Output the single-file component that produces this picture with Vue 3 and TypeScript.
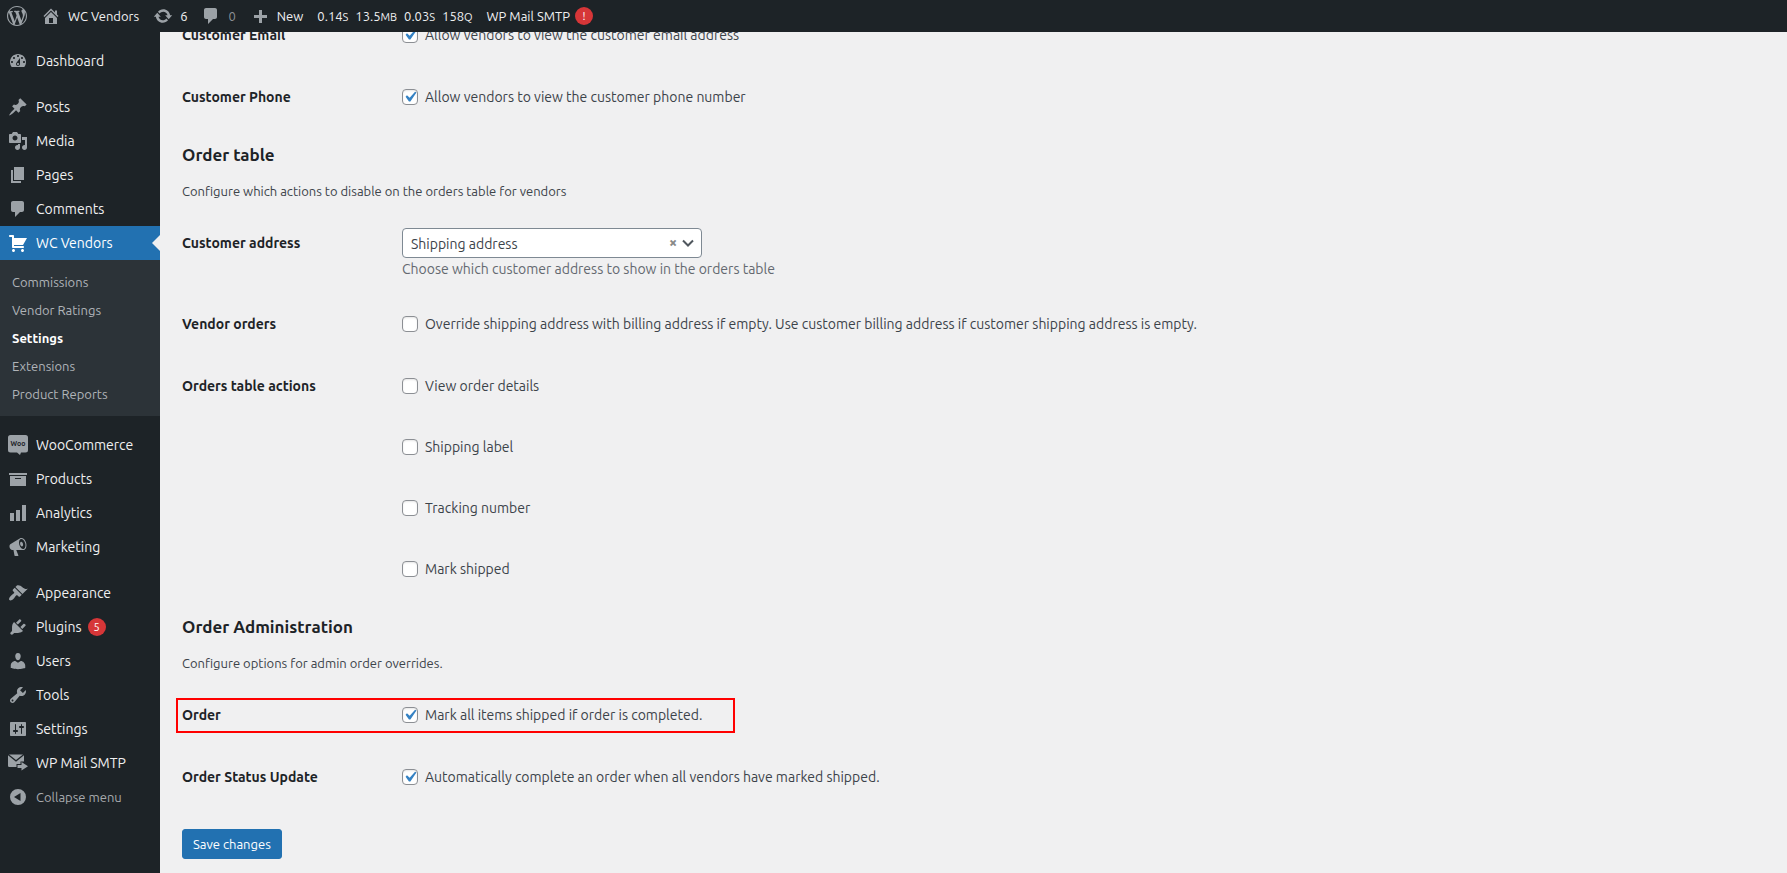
<script setup lang="ts">
import { reactive, ref } from 'vue'

interface MenuItem {
  label: string
  icon: string
  badge?: number
}

const icons: Record<string, string> = {
  wordpress:
    'M20 10c0-5.51-4.49-10-10-10C4.48 0 0 4.49 0 10c0 5.52 4.48 10 10 10 5.51 0 10-4.48 10-10zM7.78 15.37L4.37 6.22c.55-.02 1.17-.08 1.17-.08.5-.06.44-1.13-.06-1.11 0 0-1.45.11-2.37.11-.18 0-.37 0-.58-.01C4.12 2.69 6.87 1.11 10 1.11c2.33 0 4.45.87 6.05 2.34-.68-.11-1.65.39-1.65 1.58 0 .74.45 1.36.9 2.1.35.61.55 1.36.55 2.46 0 1.49-1.4 5-1.4 5l-3.03-8.37c.54-.02.82-.17.82-.17.5-.05.44-1.25-.06-1.22 0 0-1.44.12-2.38.12-.87 0-2.33-.12-2.33-.12-.5-.03-.56 1.2-.06 1.22l.92.08 1.26 3.41zM17.41 10c.24-.64.74-1.87.43-4.25.7 1.29 1.05 2.71 1.05 4.25 0 3.29-1.73 6.24-4.4 7.78.97-2.59 1.94-5.2 2.92-7.78zM6.1 18.09C3.12 16.65 1.11 13.53 1.11 10c0-1.3.23-2.48.72-3.59C3.25 10.3 4.67 14.2 6.1 18.09zm4.03-6.63l2.58 6.98c-.86.29-1.76.45-2.71.45-.79 0-1.57-.11-2.29-.33.81-2.38 1.62-4.74 2.42-7.1z',
  home: 'M16 8.5l1.53 1.53-1.06 1.06L10 4.6l-6.47 6.49-1.06-1.06L10 2.5l4 4v-2h2v4zm-6-2.46l6 5.99V18H4v-5.97zM12 17v-5H8v5h4z',
  update:
    'M10.2 3.28c3.53 0 6.43 2.61 6.92 6h2.08l-3.5 4-3.5-4h2.32c-.45-1.97-2.21-3.45-4.32-3.45-1.45 0-2.73.71-3.54 1.78L4.95 5.66C6.23 4.2 8.11 3.28 10.2 3.28zm-.4 13.44c-3.52 0-6.43-2.61-6.92-6H.8l3.5-4c1.17 1.33 2.33 2.67 3.5 4H5.48c.45 1.97 2.21 3.45 4.32 3.45 1.45 0 2.73-.71 3.54-1.78l1.71 1.95c-1.28 1.46-3.15 2.38-5.25 2.38z',
  plus: 'M17 9v3h-5v5H9v-5H4V9h5V4h3v5h5z',
  dashboard:
    'M3.76 16h12.48c1.1-1.37 1.76-3.11 1.76-5 0-4.42-3.58-8-8-8s-8 3.58-8 8c0 1.89.66 3.63 1.76 5zM10 4c.55 0 1 .45 1 1s-.45 1-1 1-1-.45-1-1 .45-1 1-1zM6 6c.55 0 1 .45 1 1s-.45 1-1 1-1-.45-1-1 .45-1 1-1zm8 0c.55 0 1 .45 1 1s-.45 1-1 1-1-.45-1-1 .45-1 1-1zm-5.37 5.55L12 7v6c0 1.1-.9 2-2 2s-2-.9-2-2c0-.57.24-1.08.63-1.45zM4 10c.55 0 1 .45 1 1s-.45 1-1 1-1-.45-1-1 .45-1 1-1zm12 0c.55 0 1 .45 1 1s-.45 1-1 1-1-.45-1-1 .45-1 1-1zm-5 3c0-.55-.45-1-1-1s-1 .45-1 1 .45 1 1 1 1-.45 1-1z',
  post: 'M10.44 3.02l1.82-1.82 6.36 6.35-1.83 1.82c-1.05-.68-2.48-.57-3.41.36l-.75.75c-.92.93-1.04 2.35-.35 3.41l-1.83 1.82-2.41-2.41-2.8 2.79c-.42.42-3.38 2.71-3.8 2.29s1.86-3.39 2.28-3.81l2.79-2.79L4.1 9.36l1.83-1.82c1.05.69 2.48.57 3.4-.36l.75-.75c.93-.92 1.05-2.35.36-3.41z',
  media:
    'M13 11V4c0-.55-.45-1-1-1h-1.67L9 1H5L3.67 3H2c-.55 0-1 .45-1 1v7c0 .55.45 1 1 1h10c.55 0 1-.45 1-1zM7 4.5c1.38 0 2.5 1.12 2.5 2.5S8.38 9.5 7 9.5 4.5 8.38 4.5 7 5.62 4.5 7 4.5zM14 6h5v10.5c0 1.38-1.12 2.5-2.5 2.5S14 17.88 14 16.5s1.12-2.5 2.5-2.5c.17 0 .34.02.5.05V9h-3V6zm-4 8.05V13h2v3.5c0 1.38-1.12 2.5-2.5 2.5S7 17.88 7 16.5 8.12 14 9.5 14c.17 0 .34.02.5.05z',
  page: 'M6 15V2h10v13H6zm-1 1h8v2H3V5h2v11z',
  comment:
    'M5 2h9c1.1 0 2 .9 2 2v7c0 1.1-.9 2-2 2h-2l-5 5v-5H5c-1.1 0-2-.9-2-2V4c0-1.1.9-2 2-2z',
  cart: 'M6 13h9c.55 0 1 .45 1 1s-.45 1-1 1H5c-.55 0-1-.45-1-1V4H2c-.55 0-1-.45-1-1s.45-1 1-1h3c.55 0 1 .45 1 1v2h13l-4 7H6v1zm-.5 3c.83 0 1.5.67 1.5 1.5S6.33 19 5.5 19 4 18.33 4 17.5 4.67 16 5.5 16zm9 0c.83 0 1.5.67 1.5 1.5s-.67 1.5-1.5 1.5-1.5-.67-1.5-1.5.67-1.5 1.5-1.5z',
  archive: 'M19 4v2H1V4h18zM2 7h16v10H2V7zm11 3V9H7v1h6z',
  chart: 'M18 18V2h-4v16h4zm-6 0V7H8v11h4zm-6 0v-8H2v8h4z',
  megaphone:
    'M18.15 5.94c.46 1.62.38 3.22-.02 4.48-.42 1.28-1.26 2.18-2.3 2.48-.16.06-.26.06-.4.06-.06.02-.12.02-.18.02-.06.02-.14.02-.22.02h-6.8l2.22 5.5c.02.14-.06.26-.14.34-.08.1-.24.16-.34.16H6.95c-.1 0-.26-.06-.34-.16-.08-.08-.16-.2-.14-.34l-1-5.5H4.25l-.02-.02c-.5.06-1.08-.18-1.54-.62s-.88-1.08-1.06-1.88c-.24-.8-.2-1.56-.02-2.2.18-.62.58-1.08 1.06-1.3l.02-.02 9-5.4c.1-.06.18-.1.24-.16.06-.04.14-.08.24-.12.16-.08.28-.12.5-.18 1.04-.3 2.24.1 3.22.98s1.84 2.24 2.26 3.86zm-2.58 5.98h-.02c.4-.1.74-.34 1.04-.7.58-.7.86-1.76.86-3.04 0-.64-.1-1.3-.28-1.98-.34-1.36-1.02-2.5-1.78-3.24s-1.68-1.1-2.46-.88c-.82.22-1.4.96-1.7 2-.32 1.04-.28 2.36.06 3.72.38 1.36 1 2.5 1.8 3.24.78.74 1.62 1.1 2.48.88zm-2.54-7.08c.22-.04.42-.02.62.04.38.16.76.48 1.02 1s.42 1.2.42 1.78c0 .3-.04.56-.12.8-.18.48-.44.84-.86.94-.34.1-.8-.06-1.14-.4s-.64-.86-.78-1.5c-.18-.62-.12-1.24.02-1.72s.48-.84.82-.94z',
  appearance:
    'M14.48 11.06L7.41 3.99l1.5-1.5c.5-.56 2.3-.47 3.51.32 1.21.8 1.43 1.28 2.91 2.1 1.18.64 2.45 1.26 4.45.85zm-.71.71L6.7 4.7 4.93 6.47c-.39.39-.39 1.02 0 1.41l1.06 1.06c.39.39.39 1.03 0 1.42-.6.6-1.43 1.11-2.21 1.69-.35.26-.7.53-1.01.84C1.43 14.23.4 16.08 1.4 17.07c.99 1 2.84-.03 4.18-1.36.31-.31.58-.66.85-1.02.57-.78 1.08-1.61 1.69-2.21.39-.39 1.02-.39 1.41 0l1.06 1.06c.39.39 1.02.39 1.41 0z',
  plugins:
    'M13.11 4.36L9.87 7.6 8 5.73l3.24-3.24c.35-.34 1.05-.2 1.56.32.52.51.66 1.21.31 1.55zm-8 1.77l.91-1.12 9.01 9.01-1.19.84c-.71.71-2.63 1.16-3.82 1.16H6.14L4.9 17.26c-.59.59-1.54.59-2.12 0-.59-.58-.59-1.53 0-2.12l1.24-1.24v-3.88c0-1.13.4-3.19 1.09-3.89zm7.26 3.97l3.24-3.24c.34-.35 1.04-.21 1.55.31.52.51.66 1.21.31 1.55l-3.24 3.25z',
  users:
    'M10 9.25c-2.27 0-2.73-3.44-2.73-3.44C7 4.02 7.82 2 9.97 2c2.16 0 2.98 2.02 2.71 3.81 0 0-.41 3.44-2.68 3.44zm0 2.57L12.72 10c2.39 0 4.52 2.33 4.52 4.53v2.49s-3.65 1.13-7.24 1.13c-3.65 0-7.24-1.13-7.24-1.13v-2.49c0-2.25 1.94-4.48 4.47-4.48z',
  tools:
    'M16.68 9.77c-1.34 1.34-3.3 1.67-4.95.99l-5.41 6.52c-.99.99-2.59.99-3.58 0s-.99-2.59 0-3.57l6.52-5.42c-.68-1.65-.35-3.61.99-4.95 1.28-1.28 3.12-1.62 4.72-1.06l-2.89 2.89 2.82 2.82 2.86-2.87c.53 1.58.18 3.39-1.08 4.65zM3.81 16.21c.4.39 1.04.39 1.43 0 .4-.4.4-1.04 0-1.43-.39-.4-1.03-.4-1.43 0-.39.39-.39 1.03 0 1.43z',
  settings:
    'M18 16V4c0-.55-.45-1-1-1H3c-.55 0-1 .45-1 1v12c0 .55.45 1 1 1h14c.55 0 1-.45 1-1zM8 11h1c.55 0 1 .45 1 1s-.45 1-1 1H8v1.5c0 .28-.22.5-.5.5s-.5-.22-.5-.5V13H6c-.55 0-1-.45-1-1s.45-1 1-1h1V5.5c0-.28.22-.5.5-.5s.5.22.5.5V11zm5-2h-1c-.55 0-1-.45-1-1s.45-1 1-1h1V5.5c0-.28.22-.5.5-.5s.5.22.5.5V7h1c.55 0 1 .45 1 1s-.45 1-1 1h-1v5.5c0 .28-.22.5-.5.5s-.5-.22-.5-.5V9z',
  woo: 'M2.5 0h15A2.5 2.5 0 0 1 20 2.500V15a2.500 2.500 0 0 1-2.500 2.500H13L12 20 9 17.500H2.500A2.500 2.500 0 0 1 0 15V2.500A2.500 2.500 0 0 1 2.500 0z',
  mail: 'M0 2.200L8 8.700 16 2.200V8.500H12.500V11H8.500V14H1.200A1.200 1.200 0 0 1 0 12.800zM1 1.500H15L8 7.100zM13.500 9L20 13.200 13.500 17.500V15H9.500V12H13.500z',
  collapse:
    'M10 2a8 8 0 1 0 0 16 8 8 0 0 0 0-16zM12.500 6v8L6 10z',
}

const menuTop: MenuItem[] = [
  { label: 'Posts', icon: 'post' },
  { label: 'Media', icon: 'media' },
  { label: 'Pages', icon: 'page' },
  { label: 'Comments', icon: 'comment' },
  { label: 'WC Vendors', icon: 'cart' },
]
const submenu = ['Commissions', 'Vendor Ratings', 'Settings', 'Extensions', 'Product Reports']
const menuShop: MenuItem[] = [
  { label: 'WooCommerce', icon: 'woo' },
  { label: 'Products', icon: 'archive' },
  { label: 'Analytics', icon: 'chart' },
  { label: 'Marketing', icon: 'megaphone' },
]
const menuAdmin: MenuItem[] = [
  { label: 'Appearance', icon: 'appearance' },
  { label: 'Plugins', icon: 'plugins', badge: 5 },
  { label: 'Users', icon: 'users' },
  { label: 'Tools', icon: 'tools' },
  { label: 'Settings', icon: 'settings' },
  { label: 'WP Mail SMTP', icon: 'mail' },
]
const menuGroups: MenuItem[][] = [[{ label: 'Dashboard', icon: 'dashboard' }], menuTop, menuShop, menuAdmin]

const stats = [
  ['0.14', 'S'],
  ['13.5', 'MB'],
  ['0.03', 'S'],
  ['158', 'Q'],
]

const address = ref('Shipping address')
const privacy = reactive([
  { id: 'email', title: 'Customer Email', text: 'Allow vendors to view the customer email address', on: true },
  { id: 'phone', title: 'Customer Phone', text: 'Allow vendors to view the customer phone number', on: true },
])
const override = ref(false)
const actions = reactive([
  { text: 'View order details', on: false },
  { text: 'Shipping label', on: false },
  { text: 'Tracking number', on: false },
  { text: 'Mark shipped', on: false },
])
const administration = reactive([
  { id: 'shipped', title: 'Order', text: 'Mark all items shipped if order is completed.', on: true, marked: true },
  {
    id: 'status',
    title: 'Order Status Update',
    text: 'Automatically complete an order when all vendors have marked shipped.',
    on: true,
    marked: false,
  },
])
</script>

<template>
  <div class="admin">
    <header class="bar">
      <a class="bar-item" href="#" aria-label="About WordPress">
        <svg class="icon" viewBox="0 0 20 20"><path :d="icons.wordpress" /></svg>
      </a>
      <a class="bar-item" href="#">
        <svg class="icon" viewBox="0 0 20 20"><path fill-rule="evenodd" :d="icons.home" /></svg>WC Vendors
      </a>
      <a class="bar-item" href="#">
        <svg class="icon" viewBox="0 0 20 20"><path :d="icons.update" /></svg>6
      </a>
      <a class="bar-item dim" href="#">
        <svg class="icon" viewBox="0 0 20 20"><path :d="icons.comment" /></svg>0
      </a>
      <a class="bar-item" href="#">
        <svg class="icon" viewBox="0 0 20 20"><path :d="icons.plus" /></svg>New
      </a>
      <a class="bar-item stats" href="#">
        <span v-for="[value, unit] in stats" :key="value">{{ value }}<small>{{ unit }}</small></span>
      </a>
      <a class="bar-item" href="#">WP Mail SMTP<span class="badge">!</span></a>
    </header>

    <div class="body">
      <nav class="menu" aria-label="Main menu">
        <ul v-for="(group, g) in menuGroups" :key="g" class="group">
          <li v-for="item in group" :key="item.label">
            <a class="menu-item" :class="{ current: item.icon === 'cart' }" href="#">
              <svg class="icon" viewBox="0 0 20 20">
                <path fill-rule="evenodd" :d="icons[item.icon]" />
                <text v-if="item.icon === 'woo'" class="woo-word" x="10" y="11" text-anchor="middle">Woo</text>
              </svg>
              {{ item.label }}
              <span v-if="item.badge" class="badge">{{ item.badge }}</span>
            </a>
            <ul v-if="item.icon === 'cart'" class="submenu">
              <li v-for="name in submenu" :key="name">
                <a :class="{ active: name === 'Settings' }" href="#">{{ name }}</a>
              </li>
            </ul>
          </li>
        </ul>
        <button class="menu-item collapse" type="button">
          <svg class="icon" viewBox="0 0 20 20"><path fill-rule="evenodd" :d="icons.collapse" /></svg>
          Collapse menu
        </button>
      </nav>

      <main class="content">
        <form class="form" @submit.prevent>
          <table class="form-table">
            <tbody>
              <tr v-for="row in privacy" :key="row.id">
                <th scope="row">{{ row.title }}</th>
                <td>
                  <label class="check"><input v-model="row.on" type="checkbox" />{{ row.text }}</label>
                </td>
              </tr>
            </tbody>
          </table>

          <h2>Order table</h2>
          <p class="intro">Configure which actions to disable on the orders table for vendors</p>
          <table class="form-table">
            <tbody>
              <tr>
                <th scope="row"><label for="address">Customer address</label></th>
                <td class="with-hint">
                  <div class="picker">
                    <select id="address" v-model="address">
                      <option>Shipping address</option>
                      <option>Billing address</option>
                    </select>
                    <button class="clear" type="button" aria-label="Clear">×</button>
                    <svg class="chevron" viewBox="0 0 12 8"><path d="M1 1.500l5 5 5-5" /></svg>
                  </div>
                  <p class="hint">Choose which customer address to show in the orders table</p>
                </td>
              </tr>
              <tr>
                <th scope="row">Vendor orders</th>
                <td>
                  <label class="check">
                    <input v-model="override" type="checkbox" />Override shipping address with billing address if empty.
                    Use customer billing address if customer shipping address is empty.
                  </label>
                </td>
              </tr>
              <tr>
                <th scope="row">Orders table actions</th>
                <td>
                  <div class="stack">
                    <label v-for="action in actions" :key="action.text" class="check">
                      <input v-model="action.on" type="checkbox" />{{ action.text }}
                    </label>
                  </div>
                </td>
              </tr>
            </tbody>
          </table>

          <h2>Order Administration</h2>
          <p class="intro">Configure options for admin order overrides.</p>
          <table class="form-table">
            <tbody>
              <tr v-for="row in administration" :key="row.id">
                <th scope="row" :class="{ marked: row.marked }">{{ row.title }}</th>
                <td>
                  <label class="check"><input v-model="row.on" type="checkbox" />{{ row.text }}</label>
                </td>
              </tr>
            </tbody>
          </table>
          <button class="save" type="submit">Save changes</button>
        </form>
      </main>
    </div>
  </div>
</template>

<style>
body {
  margin: 0;
  background: #f0f0f1;
}
</style>

<style scoped>
.admin {
  height: 100vh;
  display: flex;
  flex-direction: column;
  overflow: hidden;
  font-family: Ubuntu, 'Noto Sans', sans-serif;
  font-size: 14px;
  color: #3c434a;
}
a {
  color: inherit;
  text-decoration: none;
}
ul {
  margin: 0;
  padding: 0;
  list-style: none;
}
.icon {
  flex: none;
  width: 20px;
  height: 20px;
  fill: #9ca2a7;
}
.bar {
  position: relative;
  flex: none;
  display: flex;
  height: 32px;
  background: #1d2327;
  color: #f0f0f1;
  font-size: 13px;
}
.bar-item {
  display: flex;
  align-items: center;
  gap: 7px;
  padding: 0 7px;
  white-space: nowrap;
}
.dim {
  color: #8c9196;
}
small {
  font-size: 11px;
}
.badge {
  display: inline-flex;
  align-items: center;
  justify-content: center;
  width: 18px;
  height: 18px;
  border-radius: 50%;
  background: #d63638;
  color: #fff;
  font-size: 11px;
}
.bar .badge {
  margin-left: -2px;
}
.body {
  flex: 1;
  display: flex;
  min-height: 0;
}
.menu {
  flex: none;
  width: 160px;
  background: #1d2327;
  color: #f0f0f1;
}
.group {
  padding-top: 12px;
}
.menu-item {
  position: relative;
  display: flex;
  align-items: center;
  gap: 8px;
  height: 34px;
  padding: 0 8px;
  white-space: nowrap;
}
.menu-item .badge {
  margin-left: -2px;
}
.current {
  background: #2271b1;
  color: #fff;
}
.current .icon {
  fill: #fff;
}
.current::after {
  content: '';
  position: absolute;
  right: 0;
  top: 9px;
  border: 8px solid transparent;
  border-left-width: 0;
  border-right-color: #f0f0f1;
}
.woo-word {
  fill: #1d2327;
  font-size: 7px;
  font-weight: 700;
}
.submenu {
  padding: 8px 0;
  background: #2c3338;
  color: #b0b4b8;
  font-size: 13px;
}
.submenu a {
  display: block;
  padding: 0 12px;
  line-height: 28px;
}
.submenu .active {
  color: #fff;
  font-weight: 600;
}
.collapse {
  width: 100%;
  border: 0;
  background: none;
  color: #a7aaad;
  font: inherit;
  font-size: 13px;
}
.content {
  flex: 1;
  min-width: 0;
  overflow: hidden;
  padding: 0 22px;
}
/* The form is scrolled so that its first row passes under the bar. */
.form {
  margin-top: -28px;
}
.form-table {
  width: 100%;
  border-collapse: collapse;
}
.form-table th,
.form-table td {
  padding: 16px 0;
  line-height: 30px;
  text-align: left;
  vertical-align: top;
}
.form-table th {
  width: 220px;
  color: #1d2327;
  font-weight: 600;
}
.form-table .with-hint {
  padding-bottom: 15px;
}
h2 {
  margin: 14px 0 13px;
  color: #1d2327;
  font-size: 17px;
  font-weight: 600;
  line-height: 26px;
}
.intro {
  margin: 0 0 11px;
  font-size: 13px;
  line-height: 20px;
}
.check {
  display: flex;
  align-items: center;
  gap: 7px;
}
.check input {
  flex: none;
  appearance: none;
  width: 16px;
  height: 16px;
  margin: 0;
  border: 1px solid #8c8f94;
  border-radius: 4px;
  background: #fff;
  box-shadow: inset 0 1px 2px rgba(0, 0, 0, 0.1);
}
.check input:checked {
  background: #fff
    url("data:image/svg+xml,%3Csvg xmlns='http://www.w3.org/2000/svg' viewBox='0 0 20 20'%3E%3Cpath d='M14.83 4.89l1.34.94-5.81 8.38H9.02L5.78 9.67l1.34-1.25 2.57 2.4z' fill='%233582c4'/%3E%3C/svg%3E")
    center / 21px no-repeat;
}
.stack {
  display: grid;
  gap: 31px;
}
.picker {
  position: relative;
  display: flex;
  width: 300px;
}
.picker select {
  appearance: none;
  width: 100%;
  height: 30px;
  padding: 0 50px 2px 8px;
  border: 1px solid #7e8993;
  border-radius: 4px;
  background: #fff;
  color: #3c434a;
  font: inherit;
}
.clear {
  position: absolute;
  right: 21px;
  top: 7px;
  width: 16px;
  height: 16px;
  padding: 0;
  border: 0;
  background: none;
  color: #888;
  font: 900 14px/16px 'Open Sans', sans-serif;
}
.chevron {
  position: absolute;
  right: 8px;
  top: 11px;
  width: 12px;
  height: 8px;
  fill: none;
  stroke: #50575e;
  stroke-width: 2;
  pointer-events: none;
}
.hint {
  margin: 2px 0 0;
  color: #646970;
  line-height: 18px;
}
.marked {
  position: relative;
}
.marked::before {
  content: '';
  position: absolute;
  left: -6px;
  top: 14px;
  box-sizing: border-box;
  width: 559px;
  height: 35px;
  border: 2px solid #f00;
  pointer-events: none;
}
.save {
  margin-top: 21px;
  height: 30px;
  padding: 0 10px;
  border: 1px solid #2271b1;
  border-radius: 3px;
  background: #2271b1;
  color: #fff;
  font: inherit;
  font-size: 13px;
}
</style>
